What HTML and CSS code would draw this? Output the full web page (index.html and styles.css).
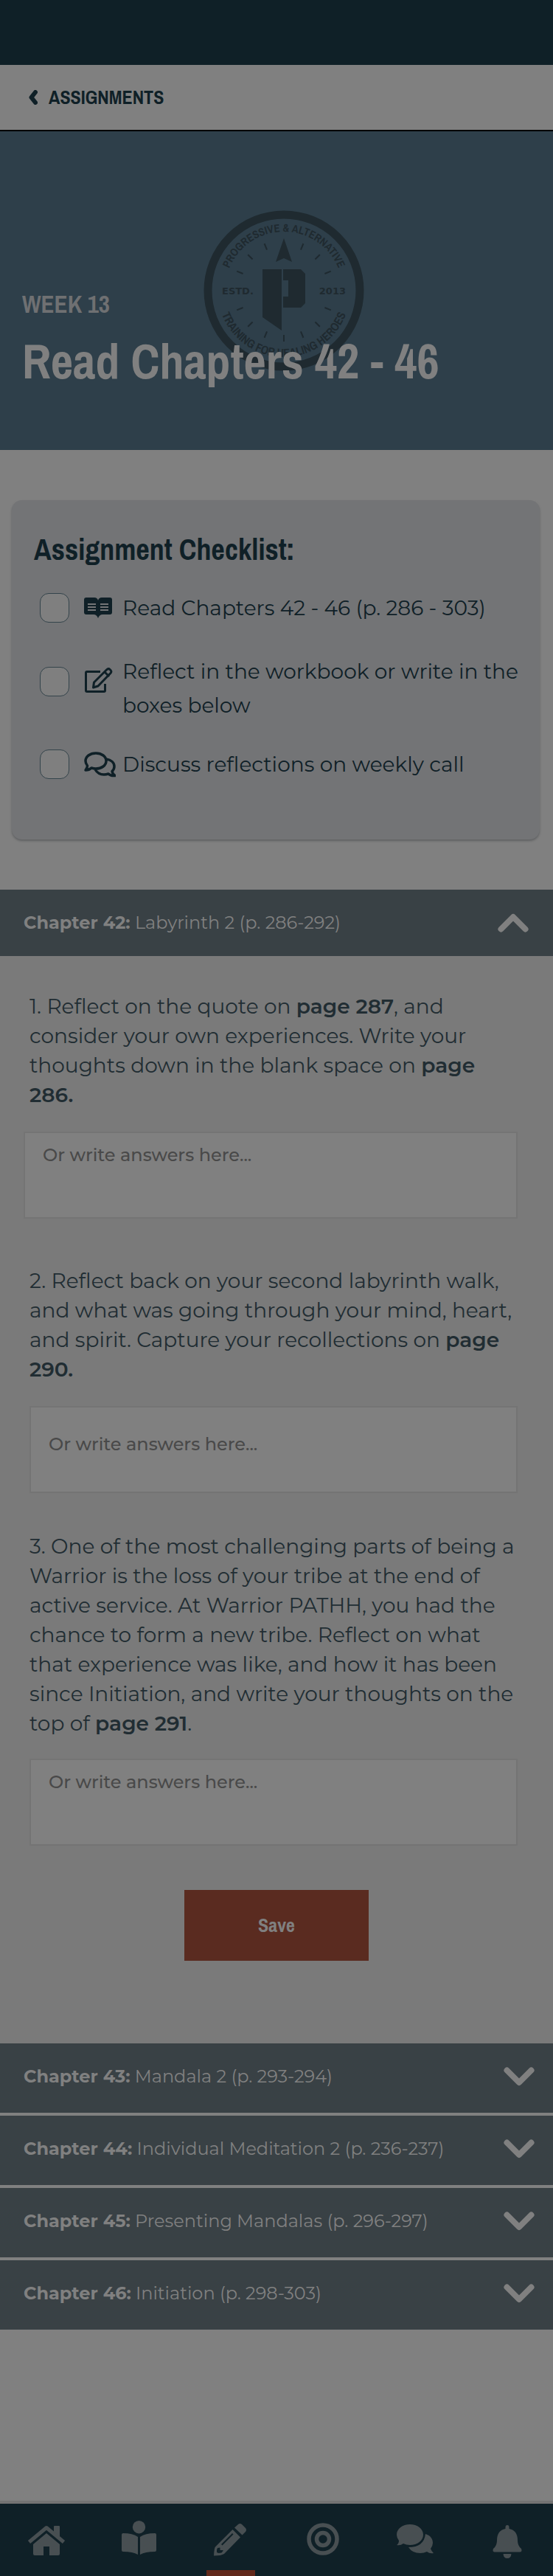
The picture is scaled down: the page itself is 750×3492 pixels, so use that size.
FILE: index.html
```html
<!DOCTYPE html>
<html lang="en">
<head>
<meta charset="utf-8">
<meta name="viewport" content="width=device-width, initial-scale=1">
<title>Week 13 – Read Chapters 42 - 46</title>
<link rel="stylesheet" href="styles.css">
</head>
<body>
<div class="status-bar"></div>
<header class="back-bar">
  <a class="back-link" href="#">
    <svg class="back-icon" viewBox="0 0 12 20" aria-hidden="true"><path d="M9 3 3.500 10 9 17" fill="none" stroke="currentColor" stroke-width="6" stroke-linecap="round" stroke-linejoin="round"/></svg>
    ASSIGNMENTS
  </a>
</header>

<main class="main">
  <section class="hero">
    <svg class="hero-logo" viewBox="-109 -109 218 218" aria-hidden="true">
      <defs>
        <path id="arc-top" d="M-80 0A80 80 0 0 1 80 0"/>
        <path id="arc-bottom" d="M-90 0A90 90 0 0 0 90 0"/>
        <path id="tick" d="M0-69V-60"/>
      </defs>
      <circle r="103" fill="none" stroke="currentColor" stroke-width="11"/>
      <g stroke="currentColor" stroke-width="2">
        <use href="#tick" transform="rotate(22.500)"/><use href="#tick" transform="rotate(45)"/><use href="#tick" transform="rotate(67.500)"/>
        <use href="#tick" transform="rotate(112.500)"/><use href="#tick" transform="rotate(135)"/><use href="#tick" transform="rotate(157.500)"/>
        <use href="#tick" transform="rotate(180)"/><use href="#tick" transform="rotate(202.500)"/><use href="#tick" transform="rotate(225)"/>
        <use href="#tick" transform="rotate(247.500)"/><use href="#tick" transform="rotate(292.500)"/><use href="#tick" transform="rotate(315)"/><use href="#tick" transform="rotate(337.500)"/>
      </g>
      <path fill="currentColor" d="M0-71 11-39 0-44-11-39ZM-29-29H-3V54L-29 36ZM-1-29H23L29-23V17L23 23H-1V8H6V-14H-1Z"/>
      <g fill="currentColor">
        <text class="logo-arc" text-anchor="middle"><textPath href="#arc-top" startOffset="50%">PROGRESSIVE &amp; ALTERNATIVE</textPath></text>
        <text class="logo-arc logo-arc-bottom" text-anchor="middle"><textPath href="#arc-bottom" startOffset="50%">TRAINING FOR HEALING HEROES</textPath></text>
        <text class="logo-side" x="-84" y="5">ESTD.</text>
        <text class="logo-side" x="84" y="5" text-anchor="end">2013</text>
      </g>
    </svg>
    <p class="hero-week">WEEK 13</p>
    <h1 class="hero-title">Read Chapters 42 - 46</h1>
  </section>

  <section class="checklist">
    <h2 class="checklist-title">Assignment Checklist:</h2>
    <label class="task">
      <input class="task-box" type="checkbox">
      <svg class="task-icon" viewBox="0 0 40 30" aria-hidden="true"><path fill="currentColor" d="M4 1H15Q19 1 20 5 21 1 25 1H36Q39 1 39 4V21Q39 24 36 24H26Q22 24 20 29 18 24 14 24H4Q1 24 1 21V4Q1 1 4 1Z"/><path stroke="#737476" stroke-width="2" d="M6 10H17M6 14H17M6 18H17M23 10H34M23 14H34M23 18H34"/></svg>
      <span class="task-text">Read Chapters 42 - 46 (p. 286 - 303)</span>
    </label>
    <label class="task task-double">
      <input class="task-box" type="checkbox">
      <svg class="task-icon" viewBox="0 0 40 36" aria-hidden="true"><g fill="none" stroke="currentColor" stroke-width="3" stroke-linejoin="round"><path d="M23 6.500H5Q3.500 6.500 3.500 8V32Q3.500 33.500 5 33.500H28Q29.500 33.500 29.500 32V23"/><path d="M13.500 28 14.500 21 31.500 4Q34 1.500 36 3.500L37 4.500Q39 6.500 36.500 9L20 26Z"/><path d="m29 7 6 6"/></g></svg>
      <span class="task-text">Reflect in the workbook or write in the boxes below</span>
    </label>
    <label class="task">
      <input class="task-box" type="checkbox">
      <svg class="task-icon task-icon-chat" viewBox="0 0 44 36" aria-hidden="true"><g fill="none" stroke="currentColor" stroke-width="3.500" stroke-linejoin="round"><path d="M17 3C25 3 31 7.500 31 13.500S25 24 17 24Q14 24 11 23 8 26 3 26 5.500 23 5.500 20 3 17 3 13.500C3 7.500 9 3 17 3Z"/><path d="M31 11C38 12 42 16 42 21Q42 25 39 27.500 39.500 31 43 33.500 37 34 34 31 31 32 28 32 20 32 16 25"/></g></svg>
      <span class="task-text">Discuss reflections on weekly call</span>
    </label>
  </section>

  <section class="chapter">
    <button class="chapter-head chapter-head-open" type="button" aria-expanded="true">
      <span><b>Chapter 42:</b> Labyrinth 2 (p. 286-292)</span>
      <svg class="chevron" viewBox="0 0 42 26" aria-hidden="true"><path d="M4.500 21.500 21 5 37.500 21.500"/></svg>
    </button>
    <form class="panel">
      <label class="question" for="answer-1">1. Reflect on the quote on <b>page 287</b>, and consider your own experiences. Write your thoughts down in the blank space on <b>page 286.</b></label>
      <textarea class="answer answer-wide" id="answer-1" placeholder="Or write answers here..."></textarea>
      <label class="question" for="answer-2">2. Reflect back on your second labyrinth walk, and what was going through your mind, heart, and spirit. Capture your recollections on <b>page 290.</b></label>
      <textarea class="answer answer-middle" id="answer-2" placeholder="Or write answers here..."></textarea>
      <label class="question question-long" for="answer-3">3. One of the most challenging parts of being a Warrior is the loss of your tribe at the end of active service. At Warrior PATHH, you had the chance to form a new tribe. Reflect on what that experience was like, and how it has been since Initiation, and write your thoughts on the top of <b>page 291</b>.</label>
      <textarea class="answer answer-last" id="answer-3" placeholder="Or write answers here..."></textarea>
      <button class="save" type="button">Save</button>
    </form>
  </section>

  <div class="chapter-list">
    <button class="chapter-head" type="button" aria-expanded="false"><span><b>Chapter 43:</b> Mandala 2 (p. 293-294)</span><svg class="chevron" viewBox="0 0 42 26" aria-hidden="true"><path d="M4.500 4.500 21 21 37.500 4.500"/></svg></button>
    <button class="chapter-head" type="button" aria-expanded="false"><span><b>Chapter 44:</b> Individual Meditation 2 (p. 236-237)</span><svg class="chevron" viewBox="0 0 42 26" aria-hidden="true"><path d="M4.500 4.500 21 21 37.500 4.500"/></svg></button>
    <button class="chapter-head" type="button" aria-expanded="false"><span><b>Chapter 45:</b> Presenting Mandalas (p. 296-297)</span><svg class="chevron" viewBox="0 0 42 26" aria-hidden="true"><path d="M4.500 4.500 21 21 37.500 4.500"/></svg></button>
    <button class="chapter-head" type="button" aria-expanded="false"><span><b>Chapter 46:</b> Initiation (p. 298-303)</span><svg class="chevron" viewBox="0 0 42 26" aria-hidden="true"><path d="M4.500 4.500 21 21 37.500 4.500"/></svg></button>
  </div>
</main>

<nav class="tabs">
  <a class="tab" href="#" aria-label="Home"><svg class="tab-icon" viewBox="0 0 52 52"><path fill="none" stroke="currentColor" stroke-width="5" stroke-linejoin="round" d="M2.500 29 26 9.500 49.500 29"/><path fill="currentColor" d="M36 8Q36 7 37 7H43Q44 7 44 8V22L36 15ZM26 17 44 32V45Q44 47 42 47H30V35H22V47H10Q8 47 8 45V32Z"/></svg></a>
  <a class="tab" href="#" aria-label="Reading"><svg class="tab-icon" viewBox="0 0 52 52"><circle cx="26.500" cy="8.700" r="8.700" fill="currentColor"/><path fill="currentColor" d="M5 17Q18 17 25 22V46Q18 42 5 42 3 42 3 40V19Q3 17 5 17ZM48 17Q35 17 28 22V46Q35 42 48 42 50 42 50 40V19Q50 17 48 17Z"/></svg></a>
  <a class="tab tab-active" href="#" aria-label="Assignments" aria-current="page"><svg class="tab-icon" viewBox="0 0 52 52"><path fill="currentColor" d="M36 5Q38.500 3 41 5L46 10Q48 12.500 46 15L41.500 19.500 31 9.500Z"/><path fill="currentColor" fill-rule="evenodd" d="M28.500 12 39 22.500 17 45Q13 47.500 3 47.500 3.500 37 5 35.500ZM28 17 13 32 14.500 33.500 29.500 18.500ZM8 37 7 39.500V43L9.500 44 13.500 43.500 15.500 41V40H11.500V36.500Z"/></svg></a>
  <a class="tab" href="#" aria-label="Goals"><svg class="tab-icon" viewBox="0 0 52 52"><g fill="none" stroke="currentColor" stroke-width="5.500"><circle cx="26" cy="25" r="19"/><circle cx="26" cy="25" r="8.500"/></g></svg></a>
  <a class="tab" href="#" aria-label="Messages"><svg class="tab-icon" viewBox="0 0 52 52"><path fill="currentColor" d="M19 5C29 5 37 11 37 19S29 33 19 33Q14 33 10 31 6 34 1 33 4 31 4 27 1 23 1 19C1 11 9 5 19 5Z"/><path fill="currentColor" d="M40 18C47 20 50 25 50 30Q50 34 47 38 48 41 51 44 46 45 42 42 38 44 33 44 22 44 17 36 38 36 40 18Z"/></svg></a>
  <a class="tab" href="#" aria-label="Notifications"><svg class="tab-icon" viewBox="0 0 52 52"><path fill="currentColor" d="M23.500 9Q23.500 6 26 6T28.500 9V11Q40 13 40 27 40 34 45 38 46.500 42 43.500 42.500H8.500Q5.500 42 7 38 12 34 12 27 12 13 23.500 11ZM20.500 45H31.500Q31 51 26 51T20.500 45Z"/></svg></a>
</nav>
</body>
</html>
```
FILE: styles.css
```css
* { box-sizing: border-box; }

:root {
  --ink: #0f2027;
  --paper: #808080;
  --slate: #394145;
  --display: "Archivo Narrow", "Roboto Condensed", sans-serif;
  --text: Montserrat, Inter, sans-serif;
}

body {
  margin: 0;
  min-height: 100vh;
  display: flex;
  flex-direction: column;
  background: var(--paper);
  color: var(--ink);
  font-family: var(--text);
}

h1, h2, p { margin: 0; }
button, textarea { font-family: inherit; }

.status-bar { height: 88px; background: var(--ink); }

.back-bar {
  display: flex;
  align-items: center;
  height: 90px;
  padding: 0 39px;
  border-bottom: 2px solid #000;
}
.back-link {
  display: flex;
  align-items: center;
  gap: 15px;
  color: inherit;
  font: bold 26px/32px var(--display);
  text-decoration: none;
}
.back-icon { width: 12px; height: 20px; }

.main { flex: 1; }

.hero {
  position: relative;
  height: 432px;
  padding: 214px 30px 0;
  background: #2e3f4a;
  color: var(--paper);
}
.hero-logo {
  position: absolute;
  top: 107px;
  left: calc(50% + 10px);
  width: 218px;
  height: 218px;
  margin-left: -109px;
  color: #1f2a30;
}
.logo-arc { font: bold 15px var(--display); }
.logo-arc-bottom { font-size: 16px; }
.logo-side { font: bold 13px "DejaVu Sans", sans-serif; }
.hero-week {
  position: relative;
  color: #6f7072;
  font: bold 33px/40px var(--display);
}
.hero-title {
  position: relative;
  margin-top: 18px;
  font: bold 66px/80px var(--display);
}

.checklist {
  margin: 68px 18px 68px 16px;
  min-height: 460px;
  padding: 42px 20px 40px 30px;
  border-radius: 14px;
  background: #737476;
  box-shadow: 0 2px 3px #5f6162;
}
.checklist-title {
  margin-bottom: 31px;
  font: bold 40px/50px var(--display);
}
.task {
  display: flex;
  align-items: center;
  padding-left: 8px;
  font-size: 28px;
  line-height: 46px;
}
.task-double {
  align-items: flex-start;
  margin: 40px 0 34px;
}
.task-box {
  appearance: none;
  flex: none;
  width: 40px;
  height: 40px;
  margin: 0 19px 0 0;
  border: 1px solid #34444b;
  border-radius: 12px;
  background: #7f7f7f;
}
.task-icon { flex: none; width: 40px; margin-right: 13px; }
.task-icon-chat { width: 44px; margin-right: 9px; }
.task-double .task-box,
.task-double .task-icon { margin-top: 17px; }

.chapter-head {
  display: flex;
  align-items: center;
  justify-content: space-between;
  width: 100%;
  height: 94px;
  padding: 0 25px 4px 32px;
  border: 0;
  background: var(--slate);
  color: var(--paper);
  font-size: 24px;
  line-height: 32px;
  text-align: left;
}
.chapter-head b { font-weight: 700; }
.chapter-head-open { height: 90px; padding: 0 33px 0 32px; }
.chevron { flex: none; width: 42px; height: 26px; }
.chevron path {
  fill: none;
  stroke: currentColor;
  stroke-width: 8px;
  stroke-linecap: round;
  stroke-linejoin: round;
}

.panel {
  padding: 48px 40px 112px;
  background: #7a7a7a;
  color: #212d33;
}
.question {
  display: block;
  margin-bottom: 30px;
  font-size: 28px;
  line-height: 40px;
}
.question b { font-weight: 600; }
.question-long { margin-bottom: 28px; }
.answer {
  display: block;
  width: calc(100% - 8px);
  height: 118px;
  padding: 14px 24px;
  border: 2px solid #747474;
  background: var(--paper);
  color: inherit;
  font-size: 24px;
  font-weight: 500;
  line-height: 32px;
  resize: none;
}
.answer::placeholder { color: #494949; opacity: 1; }
.answer-wide { width: 100%; margin: 0 0 64px -8px; }
.answer-middle { margin-bottom: 52px; padding-top: 34px; }
.answer-last { margin-bottom: 60px; }
.save {
  display: block;
  width: 250px;
  height: 96px;
  margin: 0 auto;
  border: 0;
  background: #5a2b20;
  color: var(--paper);
  font: bold 26px/32px var(--display);
}

.chapter-list { display: grid; gap: 4px; }

.tabs {
  display: grid;
  grid-template-columns: repeat(6, 1fr);
  height: 102px;
  border-top: 4px solid #737373;
  background: var(--ink);
  color: #484f52;
}
.tab {
  display: flex;
  justify-content: center;
  padding-top: 23px;
  color: inherit;
}
.tab-icon { width: 52px; height: 52px; }
.tab-active {
  background: linear-gradient(#63291c, #63291c) center bottom / 66px 8px no-repeat;
}
```
